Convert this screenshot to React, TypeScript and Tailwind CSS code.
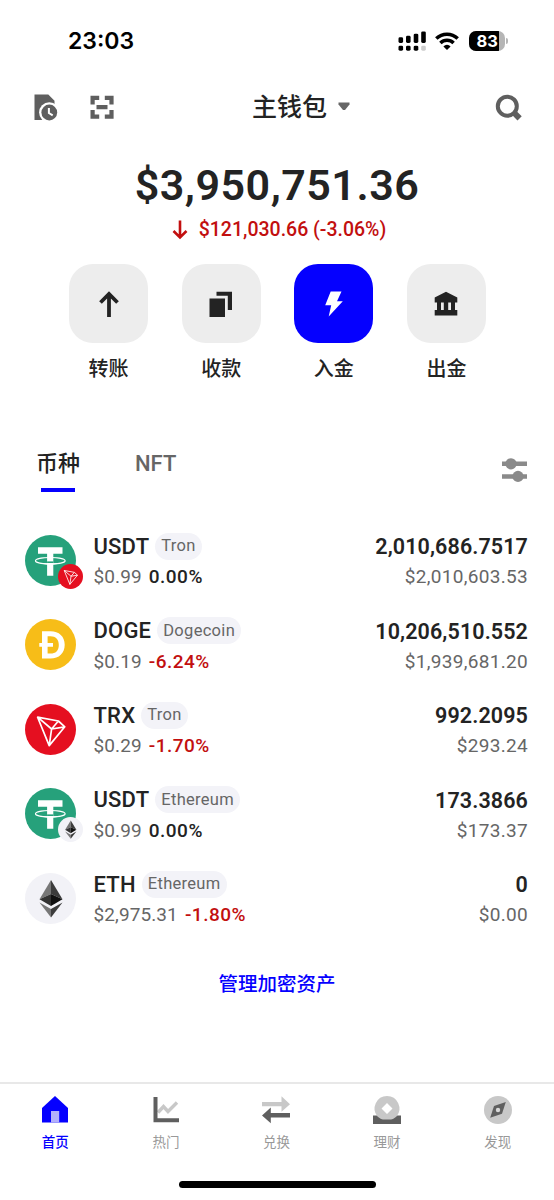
import React, { useState } from 'react';

type Token = {
  symbol: string;
  network: string;
  price: string;
  change: string;
  amount: string;
  value: string;
  icon: React.ReactNode;
  badge?: React.ReactNode;
};

const TetherIcon = () => (
  <svg viewBox="0 0 51 51" className="size-full">
    <circle cx="25.5" cy="25.5" r="25.5" fill="#26a17b" />
    <path d="M13 12.2h24.5v6.6h-9.2v21.9h-6.200V18.800H13z" fill="#fff" />
    <ellipse cx="25.3" cy="25.7" rx="14.8" ry="3.2" fill="none" stroke="#fff" strokeWidth="1.2" />
    <path d="M22.100 26.400h6.200v1.600h-6.200z" fill="#26a17b" />
    <path d="M18 28.500q7.300 1 14.600 0" fill="none" stroke="#fff" strokeWidth="1.2" />
  </svg>
);

const TronIcon = () => (
  <svg viewBox="0 0 51 51" className="size-full">
    <circle cx="25.5" cy="25.5" r="25.5" fill="#e50f20" />
    <path
      d="M12.6 13.2 33.4 17l6.4 5.8-15.6 18.8zM12.6 13.2l14 11.8-2.4 16.6M26.6 25l6.8-8M26.6 25l13.2-2.2"
      fill="none"
      stroke="#fff"
      strokeWidth="1.7"
      strokeLinejoin="round"
    />
  </svg>
);

const DogeIcon = () => (
  <svg viewBox="0 0 51 51" className="size-full">
    <circle cx="25.5" cy="25.5" r="25.5" fill="#f7bd18" />
    <path
      fillRule="evenodd"
      d="M17 12.2h8.5c8.5 0 14.2 5.2 14.2 13.6S34 39.6 25.5 39.6H17V27.7h-2.7v-3.600H17zM22.6 17.3v6.8h5.400v3.600h-5.400v6.900h2.900c5.200 0 8.300-3.200 8.300-8.700s-3.100-8.600-8.300-8.600z"
      fill="#fff"
    />
  </svg>
);

const EthIcon = () => (
  <svg viewBox="0 0 51 51" className="size-full">
    <circle cx="25.5" cy="25.5" r="25.5" fill="#f2f2f7" />
    <path d="M26 7 14.5 26.2 26 21z" fill="#777" />
    <path d="M26 7v14l11.5 5.2z" fill="#3c3c3c" />
    <path d="M14.5 26.2 26 21v12z" fill="#333" />
    <path d="M37.5 26.2 26 21v12z" fill="#111" />
    <path d="M14.5 29.5 26 36v8.5z" fill="#777" />
    <path d="M37.5 29.5 26 36v8.5z" fill="#3c3c3c" />
  </svg>
);

const tokens: Token[] = [
  {
    symbol: 'USDT',
    network: 'Tron',
    price: '$0.99',
    change: '0.00%',
    amount: '2,010,686.7517',
    value: '$2,010,603.53',
    icon: <TetherIcon />,
    badge: <TronIcon />,
  },
  {
    symbol: 'DOGE',
    network: 'Dogecoin',
    price: '$0.19',
    change: '-6.24%',
    amount: '10,206,510.552',
    value: '$1,939,681.20',
    icon: <DogeIcon />,
  },
  {
    symbol: 'TRX',
    network: 'Tron',
    price: '$0.29',
    change: '-1.70%',
    amount: '992.2095',
    value: '$293.24',
    icon: <TronIcon />,
  },
  {
    symbol: 'USDT',
    network: 'Ethereum',
    price: '$0.99',
    change: '0.00%',
    amount: '173.3866',
    value: '$173.37',
    icon: <TetherIcon />,
    badge: <EthIcon />,
  },
  {
    symbol: 'ETH',
    network: 'Ethereum',
    price: '$2,975.31',
    change: '-1.80%',
    amount: '0',
    value: '$0.00',
    icon: <EthIcon />,
  },
];

const actions = [
  {
    label: '转账',
    icon: <path d="M13 26V3M4.5 11.5 13 3l8.5 8.5" fill="none" stroke="currentColor" strokeWidth="3.8" />,
  },
  {
    label: '收款',
    icon: <path d="M1.5 7.5H17V26H1.5zM8.5.7H24V19h-4.2V4.7H8.5z" fill="currentColor" />,
  },
  {
    label: '入金',
    primary: true,
    icon: <path d="M9.700.5h10.800L16 10.300h5.800L7.700 25.600l2.500-11.300h-6z" fill="currentColor" />,
  },
  {
    label: '出金',
    icon: (
      <path
        d="M13 .8 24.300 6.500v5H22V19h2.300v5.500H1.700V19H4v-7.500H1.700v-5zM8 11.500V19h2.800v-7.500zM15.200 11.500V19H18v-7.500z"
        fillRule="evenodd"
        fill="currentColor"
      />
    ),
  },
];

const navItems = [
  {
    label: '首页',
    icon: (
      <>
        <path d="M15 1 28 13v14.5H2V13z" fill="#0500ff" />
        <path d="M11 16h8.200v11.500H11z" fill="#b3b0fb" />
      </>
    ),
  },
  {
    label: '热门',
    icon: (
      <>
        <path d="m7 17.500 5.500-6 4.500 5 9-9" fill="none" stroke="#c8c8c8" strokeWidth="3.4" />
        <path d="M2.500 2h4v21.300H28v4H2.500z" fill="#5f5f5f" />
      </>
    ),
  },
  {
    label: '兑换',
    icon: (
      <>
        <path d="M1 7h19.500V1.200l8.500 8-8.500 7.500v-5.500H1z" fill="#c8c8c8" />
        <path d="M29 18H9.800v-5.500l-8.800 8 8.800 7.800v-5.900H29z" fill="#5f5f5f" />
      </>
    ),
  },
  {
    label: '理财',
    icon: (
      <>
        <path d="M1 20.500h28V29H1z" fill="#5f5f5f" />
        <path
          fillRule="evenodd"
          d="M15 1a12.500 12.500 0 0 1 9.500 20.500Q21 24.500 19 24.500h-8Q9 24.500 5.500 21.500A12.500 12.500 0 0 1 15 1zm0 7-5.500 5.500L15 19l5.500-5.500z"
          fill="#c8c8c8"
        />
      </>
    ),
  },
  {
    label: '发现',
    icon: (
      <>
        <circle cx="15" cy="15" r="14" fill="#c8c8c8" />
        <path d="M22.800 7 19 18.700 7.200 22.800 11 11z" fill="#5f5f5f" />
        <circle cx="15" cy="15" r="2.200" fill="#d8d8d8" />
      </>
    ),
  },
];

const StatusBar = () => (
  <div className="flex h-[82px] items-center justify-between pl-[68px] pr-[46px]">
    <span className="pt-px font-['Inter',sans-serif] text-[23px] font-semibold leading-none text-black">23:03</span>
    <div className="flex items-center">
      <svg viewBox="0 0 28 20" className="mr-[9px] h-5 w-7">
        <rect x="0.5" y="6.3" width="4.6" height="5.7" rx="1.4" />
        <rect x="8" y="4.8" width="4.6" height="7.2" rx="1.4" />
        <rect x="15.7" y="2.7" width="4.6" height="9.3" rx="1.4" />
        <rect x="23.2" y="0.4" width="4.6" height="11.6" rx="1.4" />
        <rect x="0.5" y="14.7" width="4.6" height="5" rx="1.4" />
        <rect x="8" y="14.7" width="4.6" height="5" rx="1.4" />
        <rect x="15.7" y="14.7" width="4.6" height="5" rx="1.4" />
        <rect x="23.2" y="14.7" width="4.6" height="5" rx="1.4" fill="#ccc" />
      </svg>
      <svg viewBox="0 0 24 18" className="mr-[10px] h-[18px] w-6" fill="none" stroke="#000" strokeWidth="3.5">
        <path d="M1.300 6.500a15.400 15.400 0 0 1 21.400 0" />
        <path d="M5.400 11a9.500 9.500 0 0 1 13.200 0" />
        <path d="M12 18 8.400 14.400a5 5 0 0 1 7.200 0z" fill="#000" stroke="none" />
      </svg>
      <div className="flex h-5 w-9 items-center overflow-hidden rounded-[7px] bg-[#b5b5b5]">
        <div className="flex h-5 w-[30px] items-center justify-end bg-black pr-[1px]">
          <span className="font-['Inter',sans-serif] text-[16.5px] font-bold leading-none text-white">83</span>
        </div>
      </div>
      <div className="ml-[1px] h-[6px] w-[2px] rounded-r bg-[#b5b5b5]" />
    </div>
  </div>
);

const Header = () => (
  <div className="flex h-[50px] items-center justify-between pl-[34px] pr-[32px]">
    <div className="flex w-[142px] items-center gap-[32px]">
      <svg viewBox="0 0 24 27" className="h-[27px] w-6 shrink-0">
        <path d="M.5.5h13.800l6.200 6.300v5H13V26H.5z" fill="#5f5f5f" />
        <circle cx="15.3" cy="18.5" r="10.2" fill="#fff" />
        <circle cx="15.3" cy="18.5" r="7.9" fill="#5f5f5f" />
        <path d="M14.900 14v5l3.800 2.300" fill="none" stroke="#fff" strokeWidth="2" />
      </svg>
      <svg viewBox="0 0 24 24" className="size-6 shrink-0" fill="none" stroke="#5f5f5f" strokeWidth="4.2">
        <path d="M2.600 9.400V2.800h6.600M14.800 2.800h6.700v6.600M21.500 15v6.600h-6.700M9.200 21.600H2.600V15M6.500 12.200h11" />
      </svg>
    </div>
    <button className="flex items-center gap-[11px] text-[25px] font-medium leading-none text-[#232323]">
      主钱包
      <svg viewBox="0 0 12 9" className="mb-px h-[9px] w-3">
        <path d="M.5.5h11v2L7 8H5L.5 2.500z" fill="#666" />
      </svg>
    </button>
    <div className="flex w-[96px] justify-end">
      <svg viewBox="0 0 27 27" className="size-[27px]" fill="none" stroke="#5f5f5f">
        <circle cx="12.3" cy="12.2" r="9.5" strokeWidth="4" />
        <path d="m18.800 18.500 5.800 5.800" strokeWidth="6" />
      </svg>
    </div>
  </div>
);

const App = () => {
  const [activeTab, setActiveTab] = useState('币种');
  const [activeNav, setActiveNav] = useState('首页');

  return (
    <div className="flex h-[1200px] w-[554px] flex-col overflow-hidden bg-white font-['Roboto','Noto_Sans_CJK_SC',sans-serif] text-[#232323]">
      <StatusBar />
      <Header />

      {/* Balance */}
      <div className="flex flex-col items-center pt-[32px]">
        <div className="text-[43px] font-semibold leading-[43px] tracking-[0.5px]">$3,950,751.36</div>
        <div className="mt-[11px] flex h-[24px] items-center gap-[11px] pl-[4px] text-[#c20f0f]">
          <svg viewBox="0 0 16 20" className="h-5 w-4" fill="none" stroke="currentColor" strokeWidth="2.6">
            <path d="M8 .5v17M1.500 11 8 17.500l6.500-6.500" />
          </svg>
          <span className="text-[19.5px] font-medium leading-none">$121,030.66 (-3.06%)</span>
        </div>
      </div>

      {/* Quick actions */}
      <div className="mt-[22px] flex justify-between pl-[69px] pr-[68px]">
        {actions.map((action) => (
          <button key={action.label} className="flex w-[79px] flex-col items-center">
            <span
              className={`flex size-[79px] items-center justify-center rounded-[24px] ${
                action.primary ? 'bg-[#0500ff] text-white' : 'bg-[#ededed] text-[#232323]'
              }`}
            >
              <svg viewBox="0 0 26 26" className="size-[26px]">
                {action.icon}
              </svg>
            </span>
            <span className="mt-[16px] text-[20px] font-medium leading-[20px]">{action.label}</span>
          </button>
        ))}
      </div>

      {/* Tabs */}
      <div className="mt-[70px] flex h-[44px] items-start pl-[36px] pr-[26px]">
        <button onClick={() => setActiveTab('币种')} className="flex w-[44px] flex-col items-center">
          <span
            className={`text-[22px] font-medium leading-[30px] ${
              activeTab === '币种' ? 'text-[#232323]' : 'text-[#666]'
            }`}
          >
            币种
          </span>
          {activeTab === '币种' && <span className="mt-[9px] h-[4px] w-[34px] bg-[#0500ff]" />}
        </button>
        <button onClick={() => setActiveTab('NFT')} className="ml-[55px] flex flex-col items-center">
          <span
            className={`text-[22px] font-medium leading-[30px] ${
              activeTab === 'NFT' ? 'text-[#232323]' : 'text-[#666]'
            }`}
          >
            NFT
          </span>
          {activeTab === 'NFT' && <span className="mt-[9px] h-[4px] w-[34px] bg-[#0500ff]" />}
        </button>
        <svg viewBox="0 0 26 24" className="ml-auto mt-[9px] h-6 w-[26px]" fill="#8a8a8a">
          <path d="M0 3.500h25V8H0zM0 16.200h25v4.500H0z" />
          <circle cx="9" cy="5.8" r="5.6" />
          <circle cx="16" cy="18.4" r="5.6" />
        </svg>
      </div>

      {/* Token list */}
      <div className="mt-[25px] flex flex-col pl-[25px] pr-[26px]">
        {tokens.map((token) => (
          <div key={token.symbol + token.network} className="flex h-[84.5px] items-center">
            <div className="relative size-[51px] shrink-0">
              {token.icon}
              {token.badge && <div className="absolute -bottom-[3px] -right-[7px] size-[25px]">{token.badge}</div>}
            </div>
            <div className="ml-[17.5px] flex flex-1 flex-col pt-px">
              <div className="flex h-[27px] items-center gap-[6px]">
                <span className="pt-px text-[22px] font-medium leading-none tracking-[0.2px]">{token.symbol}</span>
                <span className="flex h-[27px] items-center rounded-full bg-[#f3f3f8] px-[6px] text-[16.5px] leading-none tracking-[0.3px] text-[#666]">
                  {token.network}
                </span>
              </div>
              <div className="mt-[5px] flex h-[24px] items-center gap-[7px] text-[19px] leading-none">
                <span className="tracking-[0.1px] text-[#666]">{token.price}</span>
                <span
                  className={`font-medium tracking-[0.5px] ${
                    token.change.startsWith('-') ? 'text-[#c20f0f]' : 'text-[#232323]'
                  }`}
                >
                  {token.change}
                </span>
              </div>
            </div>
            <div className="flex flex-col items-end pt-px">
              <span className="flex h-[27px] items-center pt-px text-[21.5px] font-semibold leading-none tracking-[0.1px]">
                {token.amount}
              </span>
              <span className="mt-[5px] flex h-[24px] items-center text-[19px] leading-none tracking-[0.3px] text-[#666]">
                {token.value}
              </span>
            </div>
          </div>
        ))}
      </div>

      <button className="mt-[32px] self-center text-[19.5px] font-medium leading-[24px] text-[#0500ff]">
        管理加密资产
      </button>

      {/* Bottom navigation */}
      <div className="mt-auto h-[118px] border-t-2 border-[#e8e8e8] pt-[11px]">
        <div className="flex pr-px">
          {navItems.map((item) => (
            <button
              key={item.label}
              onClick={() => setActiveNav(item.label)}
              className={`flex flex-1 flex-col items-center text-[13.5px] leading-[20px] ${
                activeNav === item.label ? 'font-medium text-[#0500ff]' : 'text-[#999]'
              }`}
            >
              <svg viewBox="0 0 30 30" className="size-[30px]">
                {item.icon}
              </svg>
              <span className="mt-[7px]">{item.label}</span>
            </button>
          ))}
        </div>
        <div className="mx-auto mt-[29px] h-[7px] w-[197px] rounded-full bg-black" />
      </div>
    </div>
  );
};

export default App;
